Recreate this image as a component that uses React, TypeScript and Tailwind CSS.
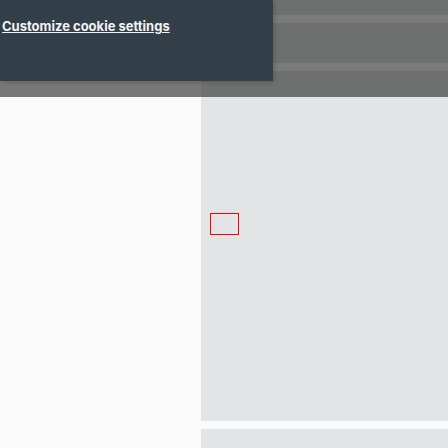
export default function App() {
  return (
    <div className="relative h-[448px] w-[448px] overflow-hidden bg-[#fafafa] font-['Inter',sans-serif]">
      <div className="flex h-[97px]">
        <div className="w-[201px] bg-[#777777]" />
        <div className="flex flex-1 flex-col bg-[#6e706f]">
          <div className="h-[15px]" />
          <div className="h-[8px] bg-[#7a7b7a]" />
          <div className="h-[40px]" />
          <div className="h-[8px] bg-[#7a7b7a]" />
        </div>
      </div>
      <div className="flex">
        <div className="w-[201px]" />
        <div className="flex flex-1 flex-col gap-[8px]">
          <div className="h-[324px] bg-[#e3e4e6] pl-[9px] pt-[116px]">
            <div className="h-[22px] w-[29px] border border-[#ff0000]" />
          </div>
          <div className="h-[40px] bg-[#e3e4e6]" />
        </div>
      </div>
      <div className="absolute left-0 top-0 h-[81px] w-[273px] bg-[#323e48] pl-[2px] pt-[13px] shadow-[2px_2px_4px_rgba(0,0,0,0.15)]">
        <a className="text-[13px] font-bold leading-[16px] text-[#f2f2f2] underline">
          Customize cookie settings
        </a>
      </div>
    </div>
  )
}
